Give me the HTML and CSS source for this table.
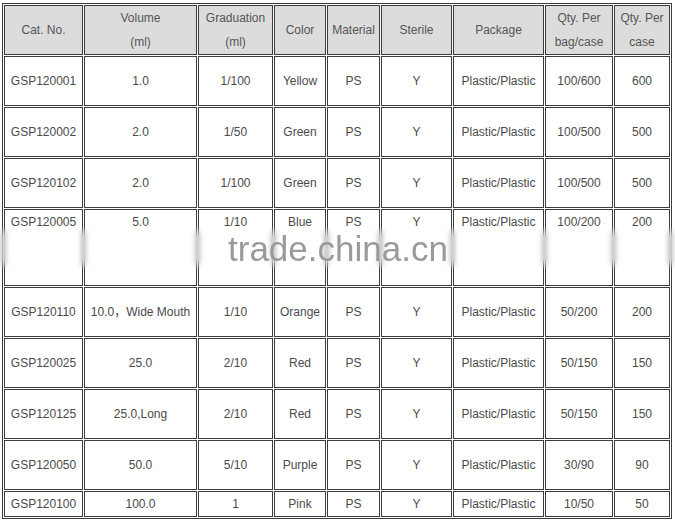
FILE: index.html
```html
<!DOCTYPE html>
<html>
<head>
<meta charset="utf-8">
<link rel="stylesheet" href="styles.css">
</head>
<body>
<div class="sheet">
<table class="spec">
  <thead>
    <tr class="head-row">
      <th class="c1">Cat. No.</th>
      <th class="c2">Volume<br>(ml)</th>
      <th class="c3">Graduation<br>(ml)</th>
      <th class="c4">Color</th>
      <th class="c5">Material</th>
      <th class="c6">Sterile</th>
      <th class="c7">Package</th>
      <th class="c8">Qty. Per<br>bag/case</th>
      <th class="c9">Qty. Per<br>case</th>
    </tr>
  </thead>
  <tbody>
    <tr><td>GSP120001</td><td>1.0</td><td>1/100</td><td>Yellow</td><td>PS</td><td>Y</td><td>Plastic/Plastic</td><td>100/600</td><td>600</td></tr>
    <tr><td>GSP120002</td><td>2.0</td><td>1/50</td><td>Green</td><td>PS</td><td>Y</td><td>Plastic/Plastic</td><td>100/500</td><td>500</td></tr>
    <tr><td>GSP120102</td><td>2.0</td><td>1/100</td><td>Green</td><td>PS</td><td>Y</td><td>Plastic/Plastic</td><td>100/500</td><td>500</td></tr>
    <tr class="tall"><td>GSP120005</td><td>5.0</td><td>1/10</td><td>Blue</td><td>PS</td><td>Y</td><td>Plastic/Plastic</td><td>100/200</td><td>200</td></tr>
    <tr><td>GSP120110</td><td>10.0<span class="cjk">，</span>Wide Mouth</td><td>1/10</td><td>Orange</td><td>PS</td><td>Y</td><td>Plastic/Plastic</td><td>50/200</td><td>200</td></tr>
    <tr><td>GSP120025</td><td>25.0</td><td>2/10</td><td>Red</td><td>PS</td><td>Y</td><td>Plastic/Plastic</td><td>50/150</td><td>150</td></tr>
    <tr><td>GSP120125</td><td>25.0,Long</td><td>2/10</td><td>Red</td><td>PS</td><td>Y</td><td>Plastic/Plastic</td><td>50/150</td><td>150</td></tr>
    <tr><td>GSP120050</td><td>50.0</td><td>5/10</td><td>Purple</td><td>PS</td><td>Y</td><td>Plastic/Plastic</td><td>30/90</td><td>90</td></tr>
    <tr class="short"><td>GSP120100</td><td>100.0</td><td>1</td><td>Pink</td><td>PS</td><td>Y</td><td>Plastic/Plastic</td><td>10/50</td><td>50</td></tr>
  </tbody>
</table>
<div class="smudge"></div>
<div class="watermark">trade.china.cn</div>
</div>
</body>
</html>
```
FILE: styles.css
```css
html, body {
  margin: 0;
  padding: 0;
  background: #ffffff;
}

.sheet {
  position: relative;
  padding: 3px 0 0 2px;
  width: 673px;
  height: 518px;
}

.spec {
  table-layout: fixed;
  width: 670px;
  border: 1px solid #3c3c3c;
  border-collapse: separate;
  border-spacing: 1px;
  font-family: "Liberation Sans", Arial, sans-serif;
  font-size: 12px;
  color: #4a4a4a;
}

.spec th,
.spec td {
  box-sizing: border-box;
  border: 1px solid #3c3c3c;
  padding: 0;
  text-align: center;
  vertical-align: middle;
  line-height: 24px;
  white-space: nowrap;
  font-weight: normal;
}

.spec th {
  background: #dcdcdc;
  color: #555555;
}

.head-row { height: 50px; }
.spec tbody tr { height: 50px; }
.spec tbody tr.tall { height: 77px; }
.spec tbody tr.tall td { vertical-align: top; }
.spec tbody tr.short { height: 24px; }

.c1 { width: 79px; }
.c2 { width: 113px; }
.c3 { width: 75px; }
.c4 { width: 52px; }
.c5 { width: 53px; }
.c6 { width: 71px; }
.c7 { width: 91px; }
.c8 { width: 68px; }
.c9 { width: 56px; }

.cjk {
  font-family: "Noto Sans CJK SC", sans-serif;
  line-height: 1;
  vertical-align: baseline;
  display: inline-block;
  height: 12px;
  overflow: visible;
}

.smudge {
  position: absolute;
  left: 0;
  top: 226px;
  width: 675px;
  height: 44px;
  backdrop-filter: blur(2.5px);
  -webkit-backdrop-filter: blur(2.5px);
  background: rgba(255, 255, 255, 0.15);
  -webkit-mask-image: linear-gradient(to bottom, transparent 0, #000 25%, #000 75%, transparent 100%);
  mask-image: linear-gradient(to bottom, transparent 0, #000 25%, #000 75%, transparent 100%);
}

.watermark {
  position: absolute;
  left: 228px;
  top: 231px;
  font-family: "Liberation Sans", Arial, sans-serif;
  font-size: 35px;
  line-height: 35px;
  color: #9a9a9a;
  white-space: nowrap;
}
```
